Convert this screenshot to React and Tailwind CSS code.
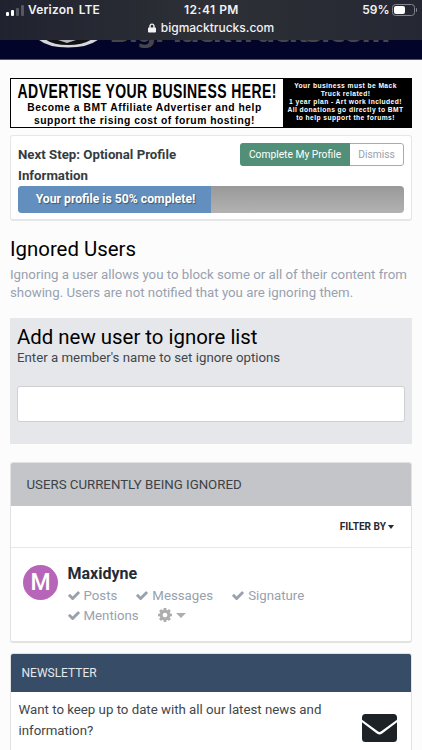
import React from 'react';
import { FaLock } from 'react-icons/fa';

const permissions = ['Posts', 'Messages', 'Signature', 'Mentions'];

function CheckIcon() {
  return (
    <svg viewBox="121 300 1550 1192" className="w-[12px] h-[9px] fill-current shrink-0">
      <path d="M1671 566q0 40-28 68l-724 724-136 136q-28 28-68 28t-68-28l-136-136-362-362q-28-28-28-68t28-68l136-136q28-28 68-28t68 28l294 295 656-657q28-28 68-28t68 28l136 136q28 28 28 68z" />
    </svg>
  );
}

function CogIcon() {
  return (
    <svg viewBox="128 128 1536 1536" className="w-[14px] h-[14px] fill-current shrink-0">
      <path d="M1152 896q0-106-75-181t-181-75-181 75-75 181 75 181 181 75 181-75 75-181zm512-109v222q0 12-8 23t-20 13l-185 28q-19 54-39 91 35 50 107 138 10 12 10 25t-9 23q-27 37-99 108t-94 71q-12 0-26-9l-138-108q-44 23-91 38-16 136-29 186-7 28-36 28h-222q-14 0-24.5-8.5t-11.5-21.5l-28-184q-49-16-90-37l-141 107q-10 9-25 9-14 0-25-11-126-114-165-168-7-10-7-23 0-12 8-23 15-21 51-66.5t54-70.5q-27-50-41-99l-183-27q-13-2-21-12.5t-8-23.5v-222q0-12 8-23t19-13l186-28q14-46 39-92-40-57-107-138-10-12-10-24 0-10 9-23 26-36 98.5-107.5t94.5-71.5q13 0 26 10l138 107q44-23 91-38 16-136 29-186 7-28 36-28h222q14 0 24.5 8.5t11.5 21.5l28 184q49 16 90 37l142-107q9-9 24-9 13 0 25 10 129 119 165 170 7 8 7 22 0 12-8 23-15 21-51 66.5t-54 70.5q26 50 41 98l183 28q13 2 21 12.5t8 23.5z" />
    </svg>
  );
}

function EnvelopeIcon() {
  return (
    <svg viewBox="0 0 35 28" className="w-[35px] h-[28px] fill-[#1d2226] shrink-0">
      <path d="M3.5 0h28A3.5 3.5 0 0 1 35 3.500v2.200L19.200 17.300q-1.700 1.300-3.400 0L0 5.700V3.500A3.500 3.500 0 0 1 3.500 0z" />
      <path d="M0 8.200l14.800 11.300q2.700 1.800 5.400 0L35 8.200v16.300a3.500 3.500 0 0 1-3.500 3.500h-28A3.500 3.500 0 0 1 0 24.500z" />
    </svg>
  );
}

function StatusBar() {
  return (
    <div className="h-10 shrink-0 bg-gradient-to-r from-[#20222f] via-[#2e3036] to-[#252733] text-[#f2f2f4] font-['Inter',sans-serif]">
      <div className="h-5 grid grid-cols-[1fr_auto_1fr] items-center pl-[6px] pr-[5px] text-[12px] leading-5 font-semibold">
        <div className="flex items-center">
          <div className="flex items-end gap-[2px] mr-[4px] h-[11px]">
            <span className="w-[3px] h-[4px] rounded-[1px] bg-white" />
            <span className="w-[3px] h-[6px] rounded-[1px] bg-white" />
            <span className="w-[3px] h-[8px] rounded-[1px] bg-[#555763]" />
            <span className="w-[3px] h-[11px] rounded-[1px] bg-[#555763]" />
          </div>
          <span className="tracking-[0.2px]">Verizon</span>
          <span className="ml-[5px]">LTE</span>
        </div>
        <span className="tracking-[0.5px]">12:41 PM</span>
        <div className="flex items-center justify-end">
          <span>59%</span>
          <span className="ml-[2px] w-[23px] h-[12px] rounded-[3.5px] border border-[#85868d] p-[1px]">
            <span className="block w-[11px] h-[8px] rounded-[2px] bg-white" />
          </span>
          <span className="ml-[1px] w-[1.5px] h-[4px] rounded-r bg-[#85868d]" />
        </div>
      </div>
      <div className="h-[15px] flex items-center justify-center gap-[5px] text-[12px] font-medium leading-[15px]">
        <FaLock className="w-[8px] h-[10px]" />
        <span>bigmacktrucks.com</span>
      </div>
    </div>
  );
}

function SiteHeader() {
  return (
    <div className="relative h-5 shrink-0 bg-[#020529] border-b border-[#55576e] overflow-hidden">
      <svg viewBox="0 0 80 10" className="absolute left-[30px] top-0 w-[80px] h-[10px]">
        <path d="M8 -1Q17 7.5 38 7.5T69 -1z" fill="#d5d7dc" />
        <path d="M15 -1Q22 5 38 5T62 -1z" fill="#111" />
        <path d="M28 0h18l-9 3z" fill="#b5b7bd" />
      </svg>
      <span className="absolute left-[109px] top-[-21px] text-[28px] leading-[28px] font-bold text-[#45464c] whitespace-nowrap font-['DejaVu_Sans',sans-serif] tracking-[-1.8px]">
        BigMackTrucks.com
      </span>
    </div>
  );
}

function Banner() {
  return (
    <div className="flex h-[50px] border border-black bg-white text-black font-bold font-['Liberation_Sans',sans-serif] whitespace-nowrap">
      <div className="w-[272px] pt-[1px] flex flex-col items-center">
        <span className="text-[20px] leading-[22px] scale-x-[0.7] tracking-[0.6px]">ADVERTISE YOUR BUSINESS HERE!</span>
        <span className="mr-[5px] text-[10.3px] leading-[12.5px] tracking-[0.52px]">Become a BMT Affiliate Advertiser and help</span>
        <span className="mr-[5px] text-[10.3px] leading-[12.5px] tracking-[0.52px]">support the rising cost of forum hosting!</span>
      </div>
      <div className="flex-1 bg-black text-white text-[6.7px] leading-[8px] tracking-[0.42px] text-center pt-[3px] pr-[3px]">
        <p>Your business must be Mack</p>
        <p>Truck related!</p>
        <p>1 year plan - Art work included!</p>
        <p>All donations go directly to BMT</p>
        <p>to help support the forums!</p>
      </div>
    </div>
  );
}

function ProfileStep() {
  return (
    <div className="mt-[7px] h-[86px] rounded-[3px] bg-white border border-[#e6e6e6] border-b-2 px-[7px] pt-[7px]">
      <div className="flex justify-between items-start">
        <h3 className="w-[190px] pt-[1px] text-[13.25px] leading-[21px] font-bold text-[#353c41]">Next Step: Optional Profile Information</h3>
        <div className="flex h-[23px] text-[10.25px] leading-[21px] rounded-[3px] overflow-hidden">
          <button className="w-[110px] bg-[#528f79] text-white">Complete My Profile</button>
          <button className="w-[54px] border border-l-0 border-[#a3adba] rounded-r-[3px] text-[#98a1b0]">Dismiss</button>
        </div>
      </div>
      <div className="h-[27px] rounded-[4px] overflow-hidden bg-gradient-to-b from-[#999] to-[#b2b2b2]">
        <div className="w-1/2 h-full bg-[#628fbe] text-center text-white text-[12.2px] leading-[27px] font-bold [text-shadow:1px_1px_1px_#00000066] pl-[2px]">
          Your profile is 50% complete!
        </div>
      </div>
    </div>
  );
}

function IgnoreForm() {
  return (
    <div className="h-[126px] bg-[#e6e7eb] px-[7px] pt-[7px]">
      <h2 className="text-[20.4px] leading-[24px] text-black">Add new user to ignore list</h2>
      <p className="text-[13.25px] leading-[17px] text-[#40464b]">Enter a member's name to set ignore options</p>
      <input type="text" className="block mt-[20px] w-full h-[36px] bg-white border border-[#cfcfcf] rounded-[3px]" />
    </div>
  );
}

function IgnoredList() {
  return (
    <div className="mt-[18px] h-[181px] rounded-[3px] bg-white border border-[#e2e2e2] border-b-2 overflow-hidden">
      <div className="h-[43px] bg-[#c4c5c8] px-[15.5px] text-[13.25px] leading-[43px] text-[#3d4247]">USERS CURRENTLY BEING IGNORED</div>
      <div className="h-[42px] border-b border-[#e8e8e8] flex items-center justify-end gap-[2px] pr-[17px] text-[10.1px] font-bold text-[#272a34]">
        FILTER BY
        <span className="border-x-[3.5px] border-x-transparent border-t-[4px] border-t-[#272a34]" />
      </div>
      <div className="flex pl-[12px] pt-[15px]">
        <div className="mt-[2px] w-[35px] h-[35px] rounded-full bg-[#b765b9] text-white text-[23px] leading-[35px] text-center font-medium">M</div>
        <div className="ml-[9.5px]">
          <h4 className="pt-px text-[16px] leading-[20px] font-bold text-[#272a34]">Maxidyne</h4>
          <ul className="mt-[2px] w-[280px] flex flex-wrap items-center gap-x-[19px] text-[13.25px] leading-[19.5px] text-[#98a1ae]">
            {permissions.map((p) => (
              <li key={p} className="flex items-center gap-[4px]">
                <CheckIcon />
                {p}
              </li>
            ))}
            <li className="flex items-center gap-[4px] text-[#adadad]">
              <CogIcon />
              <span className="border-x-[5px] border-x-transparent border-t-[5px] border-t-[#adadad]" />
            </li>
          </ul>
        </div>
      </div>
    </div>
  );
}

function Newsletter() {
  return (
    <div className="mt-[10px] h-[110px] rounded-[3px] bg-white border border-[#e2e2e2] overflow-hidden">
      <div className="h-[38px] bg-[#374c66] px-[10.5px] text-[12px] leading-[38px] text-[#e4e8ec]">NEWSLETTER</div>
      <div className="flex justify-between pl-[7.5px] pr-[14px] pt-[8px]">
        <p className="w-[320px] text-[13.25px] leading-[20.5px] text-[#40464b]">
          Want to keep up to date with all our latest news and information?
        </p>
        <div className="pt-[14px]">
          <EnvelopeIcon />
        </div>
      </div>
    </div>
  );
}

export default function App() {
  return (
    <div className="w-[422px] h-[750px] overflow-hidden flex flex-col bg-[#fcfcfc] font-['Roboto',sans-serif]">
      <StatusBar />
      <SiteHeader />
      <main className="px-[10px] pt-[18px]">
        <Banner />
        <ProfileStep />
        <h1 className="mt-[15px] text-[20.4px] leading-[26px] text-black">Ignored Users</h1>
        <p className="mt-[4px] mb-[16px] text-[13.25px] leading-[18px] text-[#98a1b0]">
          Ignoring a user allows you to block some or all of their content from showing. Users are not notified that you are ignoring them.
        </p>
        <IgnoreForm />
        <IgnoredList />
        <Newsletter />
      </main>
    </div>
  );
}
